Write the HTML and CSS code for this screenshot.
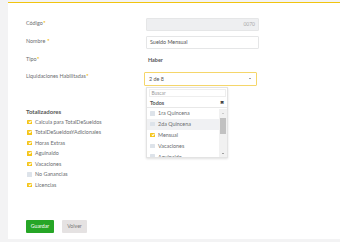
FILE: index.html
```html
<!DOCTYPE html>
<html lang="es">
<head>
    <meta charset="UTF-8">
    <meta name="viewport" content="width=device-width, initial-scale=1.0">
    <title>Concepto</title>
    <link rel="stylesheet" href="styles.css">
</head>
<body>

    <section class="card">
        <!-- Datos del concepto -->
        <div class="row">
            <label class="lbl">Código<span class="req">*</span></label>
            <div class="input disabled">0070</div>
        </div>
        <div class="row">
            <label class="lbl">Nombre <span class="req">*</span></label>
            <div class="input">Sueldo Mensual</div>
        </div>
        <div class="row tipo">
            <label class="lbl">Tipo<span class="req">*</span></label>
            <div class="value">Haber</div>
        </div>
        <div class="row">
            <label class="lbl">Liquidaciones Habilitadas<span class="req">*</span></label>
            <div class="select">2 de 8 <span class="caret"></span></div>
        </div>

        <!-- Totalizadores -->
        <div class="totales">
            <h3>Totalizadores</h3>
            <ul class="checks">
                <li><span class="cb on"></span>Calcula para TotalDeSueldos</li>
                <li><span class="cb on"></span>TotalDeSueldosYAdicionales</li>
                <li><span class="cb on"></span>Horas Extras</li>
                <li><span class="cb on"></span>Aguinaldo</li>
                <li><span class="cb on"></span>Vacaciones</li>
                <li><span class="cb"></span>No Ganancias</li>
                <li><span class="cb on"></span>Licencias</li>
            </ul>
        </div>

        <div class="actions">
            <button class="btn save">Guardar</button>
            <button class="btn back">Volver</button>
        </div>

        <!-- Desplegable abierto de liquidaciones -->
        <div class="dropdown">
            <div class="search">Buscar</div>
            <div class="all">Todos <span class="clear">&#x2716;</span></div>
            <ul class="opts">
                <li><span class="cb"></span>1ra Quincena</li>
                <li class="hover"><span class="cb"></span>2da Quincena</li>
                <li><span class="cb on"></span>Mensual</li>
                <li><span class="cb"></span>Vacaciones</li>
                <li><span class="cb"></span>Aguinaldo</li>
            </ul>
            <div class="scroll">
                <span class="up"></span>
                <span class="thumb"></span>
                <span class="down"></span>
            </div>
        </div>
    </section>

</body>
</html>
```

FILE: styles.css
```css
/* base */
*{
    margin: 0;
    padding: 0;
    box-sizing: border-box;
}
body{
    background: #f3f3f4;
    font-family: Lato, "Open Sans", sans-serif;
    font-size: 5.4px;
    color: #676a6c;
    height: 242px;
    overflow: hidden;
}

/* white panel with yellow top line */
.card{
    position: relative;
    margin: 2px 0 0 8px;
    height: 237px;
    background: #fff;
    border-top: 1px solid #f1c40f;
    padding: 15px 0 0 18px;
}

.row{
    display: grid;
    grid-template-columns: 120px 113px;
    align-items: start;
    margin-bottom: 5.5px;
}
.lbl{
    padding-top: 1.5px;
    color: #6b6d70;
}
.req{
    color: #f2b600;
    font-weight: bold;
    margin-left: 0.5px;
}

.input{
    height: 12.5px;
    line-height: 11px;
    border: 1px solid #e5e6e7;
    border-radius: 1px;
    padding: 0 3px;
    color: #555;
}
.input.disabled{
    background: #eeeff1;
    text-align: right;
    color: #aaa;
    font-size: 5px;
}

.tipo{
    height: 11px;
    align-items: center;
    margin-top: 6px;
    margin-bottom: 6px;
}
.tipo .lbl{
    padding-top: 0;
    margin-top: -3px;
}
.value{
    font-weight: bold;
    color: #555;
    padding-left: 2px;
}
.row:nth-child(4){
    grid-template-columns: 118px 113px;
}
.select{
    position: relative;
    height: 14px;
    line-height: 12px;
    border: 1px solid #f5d66a;
    border-radius: 1px;
    padding: 0 4px;
    color: #555;
}
.caret{
    position: absolute;
    right: 5px;
    top: 5.5px;
    border-left: 1.3px solid transparent;
    border-right: 1.3px solid transparent;
    border-top: 1.6px solid #444;
}

/* Totalizadores */
.totales{
    margin-top: 22px;
}
.totales h3{
    font-size: 6px;
    font-weight: bold;
    color: #555;
    line-height: 8px;
    margin-bottom: 1px;
}
.checks{
    list-style: none;
}
.checks li{
    display: flex;
    align-items: center;
    height: 10.5px;
    padding-left: 1px;
    color: #6b6d70;
}
.cb{
    display: inline-block;
    width: 4.5px;
    height: 4.5px;
    margin-right: 3.5px;
    background: #dde3ea;
    border-radius: 0.5px;
    position: relative;
}
.cb.on{
    background: #f5c518;
}
.cb.on::after{
    content: "";
    position: absolute;
    left: 1.6px;
    top: 0.4px;
    width: 1px;
    height: 2.4px;
    border-right: 0.8px solid #fff;
    border-bottom: 0.8px solid #fff;
    transform: rotate(40deg);
}

/* buttons */
.actions{
    display: flex;
    gap: 8px;
    margin-top: 30px;
}
.btn{
    font-family: inherit;
    font-size: 5.2px;
    height: 12.5px;
    border: none;
    border-radius: 1px;
}
.save{
    width: 28px;
    background: #26a626;
    color: #fff;
}
.back{
    width: 25px;
    background: #e5e2e2;
    color: #777;
}

/* open dropdown */
.dropdown{
    position: absolute;
    left: 138px;
    top: 84px;
    width: 82px;
    height: 71px;
    background: #fff;
    border: 1px solid #e3e3e3;
    box-shadow: 0 1px 2px rgba(0,0,0,0.12);
    overflow: hidden;
}
.search{
    margin: 1px 1.5px 0;
    height: 8px;
    line-height: 7px;
    border: 1px solid #eee;
    padding-left: 2px;
    font-size: 4.8px;
    color: #999;
}
.all{
    display: flex;
    justify-content: space-between;
    align-items: center;
    height: 11px;
    padding: 1px 3px 0;
    font-weight: bold;
    color: #555;
    border-bottom: 1px solid #e8e8e8;
}
.clear{
    font-size: 4.5px;
    color: #444;
}
.opts{
    list-style: none;
    margin-right: 8px;
}
.opts li{
    display: flex;
    align-items: center;
    height: 10.8px;
    padding-left: 3px;
    color: #6b6d70;
}
.opts li.hover{
    background: #f0f1f3;
}
.scroll{
    position: absolute;
    right: 0;
    top: 21px;
    width: 8px;
    bottom: 0;
    background: #f1f1f1;
}
.up, .down{
    position: absolute;
    left: 2.5px;
    border-left: 1.5px solid transparent;
    border-right: 1.5px solid transparent;
}
.up{
    top: 4px;
    border-bottom: 1.5px solid #a3a3a3;
}
.down{
    bottom: 3px;
    border-top: 1.5px solid #505050;
}
.thumb{
    position: absolute;
    left: 1px;
    right: 1px;
    top: 9px;
    height: 16px;
    background: #c1c1c1;
}
```
